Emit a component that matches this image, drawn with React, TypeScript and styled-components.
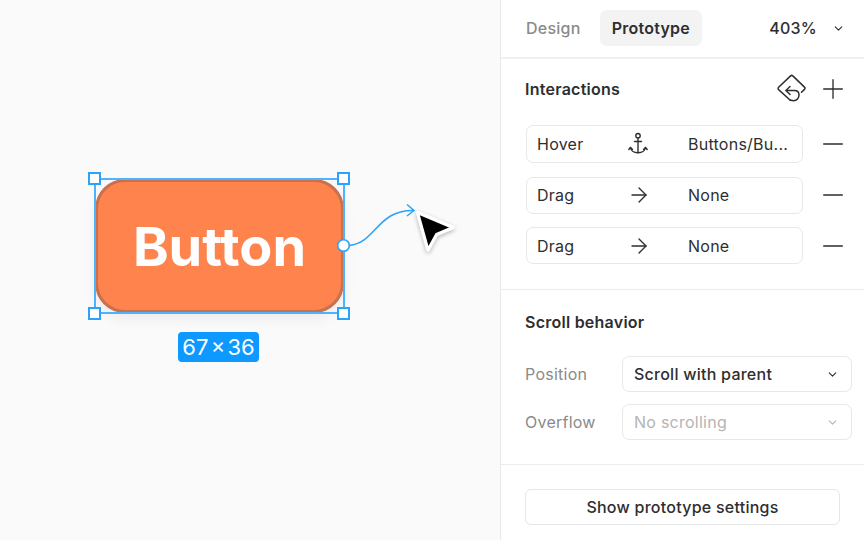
import React from "react";
import styled, { createGlobalStyle } from "styled-components";
import { ArrowRight, ChevronDown, Minus, Plus } from "lucide-react";

const GlobalStyle = createGlobalStyle`
  html, body {
    margin: 0;
    padding: 0;
    width: 864px;
    height: 540px;
    overflow: hidden;
    background: #fff;
    font-family: Inter, "Noto Sans", sans-serif;
    color: #2e2e2e;
  }
  * {
    box-sizing: border-box;
  }
`;

const Page = styled.div`
  display: flex;
  width: 864px;
  height: 540px;
`;

const Canvas = styled.div`
  position: relative;
  width: 501px;
  height: 540px;
  background: #fafafa;
  border-right: 1px solid #e9e9e9;
`;

const ButtonNode = styled.div`
  position: absolute;
  left: 95px;
  top: 179px;
  width: 249px;
  height: 134px;
  display: flex;
  align-items: center;
  justify-content: center;
  background: #ff834d;
  border: 3px solid #c9704f;
  border-radius: 30px;
  box-shadow: 0 6px 14px rgba(0, 0, 0, 0.06);
  color: #fff;
  font-size: 54px;
  font-weight: 700;
`;

const Selection = styled.div`
  position: absolute;
  left: 94px;
  top: 178px;
  width: 251px;
  height: 136px;
  border: 2px solid #4fb2fb;
`;

const Handle = styled.div<{ $x: number; $y: number }>`
  position: absolute;
  left: ${({ $x }) => $x}px;
  top: ${({ $y }) => $y}px;
  width: 13px;
  height: 13px;
  background: #fff;
  border: 2px solid #2ba3fb;
`;

const SizeLabel = styled.div`
  position: absolute;
  left: 178px;
  top: 332px;
  width: 81px;
  height: 30px;
  display: flex;
  align-items: center;
  justify-content: center;
  background: #0d99ff;
  border-radius: 4px;
  color: #fff;
  font-size: 22px;
  word-spacing: -4px;
  white-space: nowrap;
`;

const Overlay = styled.svg`
  position: absolute;
  left: 0;
  top: 0;
`;

const Panel = styled.div`
  flex: 1;
  display: flex;
  flex-direction: column;
  min-width: 0;
  letter-spacing: 0.25px;
`;

const Header = styled.div`
  display: flex;
  align-items: center;
  height: 59px;
  padding: 0 19px 1px 25px;
  border-bottom: 2px solid #f0f0f0;
  font-size: 16px;
`;

const Tab = styled.div<{ $active?: boolean }>`
  display: flex;
  align-items: center;
  height: 36px;
  padding: 0 12px;
  margin-right: ${({ $active }) => ($active ? "0" : "7px")};
  margin-left: ${({ $active }) => ($active ? "0" : "-12px")};
  border-radius: 7px;
  background: ${({ $active }) => ($active ? "#f3f3f3" : "transparent")};
  color: ${({ $active }) => ($active ? "#2e2e2e" : "#8a8a8a")};
  font-weight: ${({ $active }) => ($active ? 600 : 500)};
`;

const Zoom = styled.div`
  margin-left: auto;
  display: flex;
  align-items: center;
  gap: 15px;
  font-weight: 500;
`;

const Section = styled.div`
  padding: 0 24px;
`;

const InteractionsSection = styled(Section)`
  height: 231px;
  padding: 18px 15px 0 24px;
  border-bottom: 1px solid #ececec;
`;

const TitleRow = styled.div`
  display: flex;
  align-items: center;
  height: 24px;
  margin-bottom: 24px;
`;

const ScrollTitleRow = styled(TitleRow)`
  margin-bottom: 22px;
`;

const Title = styled.div`
  font-size: 16px;
  font-weight: 600;
  color: #2e2e2e;
`;

const TitleActions = styled.div`
  margin-left: auto;
  display: flex;
  align-items: center;
  gap: 11px;
`;

const Rows = styled.div`
  display: flex;
  flex-direction: column;
  gap: 13.5px;
`;

const Row = styled.div`
  display: flex;
  align-items: center;
  justify-content: space-between;
`;

const RowBox = styled.div<{ $tall?: boolean }>`
  display: grid;
  grid-template-columns: 90px 61px 1fr;
  align-items: center;
  width: 277px;
  height: ${({ $tall }) => ($tall ? "38px" : "37px")};
  margin-left: 1px;
  padding-left: 10px;
  border: 1px solid #e8e8e8;
  border-radius: 7px;
  font-size: 16px;
  white-space: nowrap;
`;

const ScrollSection = styled(Section)`
  height: 175px;
  padding: 20px 12px 0 24px;
  border-bottom: 1px solid #ececec;
`;

const FieldRow = styled.div`
  display: flex;
  align-items: center;
  justify-content: space-between;
  margin-bottom: 12px;
`;

const FieldLabel = styled.div`
  font-size: 16px;
  color: #8a8a8a;
`;

const Select = styled.div<{ $disabled?: boolean }>`
  display: flex;
  align-items: center;
  justify-content: space-between;
  width: 230px;
  height: 36px;
  padding: 0 12px 0 11px;
  border: 1px solid #e8e8e8;
  border-radius: 7px;
  font-size: 16px;
  font-weight: ${({ $disabled }) => ($disabled ? 400 : 500)};
  color: ${({ $disabled }) => ($disabled ? "#b4b4b4" : "#2e2e2e")};
`;

const FooterSection = styled(Section)`
  padding-top: 24px;
`;

const SettingsButton = styled.div`
  display: flex;
  align-items: center;
  justify-content: center;
  width: 315px;
  height: 36px;
  border: 1px solid #e6e6e6;
  border-radius: 6px;
  font-size: 16px;
  font-weight: 500;
`;

const LoopIcon = () => (
  <svg width="30" height="30" viewBox="0 0 30 30" fill="none" stroke="#2e2e2e" strokeWidth="1.5" strokeLinecap="round" strokeLinejoin="round">
    <path d="M14 26 2.6 15.6a1.6 1.6 0 0 1 0-2.3L14.6 1.9a1.6 1.6 0 0 1 2.2 0l11.7 11.2a1.6 1.6 0 0 1 0 2.3l-3 2.9" />
    <path d="M14 12.5 10 16.5l4 4" />
    <path d="M10 16.5h8.5c3 0 4.5 2 4.5 4.5 0 3-2.2 5.7-5.2 5.7-1.5 0-2.8-.3-3.8-.7" />
  </svg>
);

const AnchorIcon = () => (
  <svg width="22" height="26" viewBox="0 0 22 26" fill="none" stroke="#2e2e2e" strokeWidth="1.4" strokeLinecap="round" strokeLinejoin="round">
    <circle cx="11" cy="4.7" r="2.2" />
    <path d="M11 7v14.7" />
    <path d="M7.5 10.5h7" />
    <path d="M3.5 16.5c.5 3 3.5 5.2 7.5 5.2s7-2.2 7.5-5.2" />
    <path d="M1.8 18.5 3.5 16.5l2 2" />
    <path d="M16.5 18.5l2-2 1.7 2" />
  </svg>
);

const handles = [
  { x: 88, y: 172 },
  { x: 337, y: 172 },
  { x: 88, y: 307 },
  { x: 337, y: 307 },
];

const interactions = [
  { trigger: "Hover", icon: <AnchorIcon />, target: "Buttons/Bu...", tall: true },
  { trigger: "Drag", icon: <ArrowRight size={24} strokeWidth={1.4} />, target: "None", tall: false },
  { trigger: "Drag", icon: <ArrowRight size={24} strokeWidth={1.4} />, target: "None", tall: false },
];

export default function App() {
  return (
    <Page>
      <GlobalStyle />
      <Canvas>
        <ButtonNode>Button</ButtonNode>
        <Selection />
        {handles.map((h) => (
          <Handle key={`${h.x}-${h.y}`} $x={h.x} $y={h.y} />
        ))}
        <SizeLabel>67 × 36</SizeLabel>
        <Overlay width="500" height="540" viewBox="0 0 500 540" fill="none">
          <defs>
            <filter id="cursor-shadow" x="-30%" y="-30%" width="160%" height="160%">
              <feDropShadow dx="0" dy="1.5" stdDeviation="2" floodColor="#000" floodOpacity="0.3" />
            </filter>
          </defs>
          <circle cx="343.5" cy="245.5" r="5.8" fill="#fff" stroke="#2ba3fb" strokeWidth="1.6" />
          <path d="M349.5 245.5C376 243 377 209.5 414 210.5" stroke="#2ba3fb" strokeWidth="1.5" />
          <path d="M407 204.5 414 210.5 407 216" stroke="#2ba3fb" strokeWidth="1.5" />
          <path
            d="M417.5 212.5 453 227.5 436.5 234.5 428 250Z"
            fill="#000"
            stroke="#fff"
            strokeWidth="3"
            strokeLinejoin="round"
            filter="url(#cursor-shadow)"
          />
        </Overlay>
      </Canvas>
      <Panel>
        <Header>
          <Tab>Design</Tab>
          <Tab $active>Prototype</Tab>
          <Zoom>
            403%
            <ChevronDown size={13} strokeWidth={2} />
          </Zoom>
        </Header>
        <InteractionsSection>
          <TitleRow>
            <Title>Interactions</Title>
            <TitleActions>
              <LoopIcon />
              <Plus size={32} strokeWidth={1} />
            </TitleActions>
          </TitleRow>
          <Rows>
            {interactions.map((item, i) => (
              <Row key={i}>
                <RowBox $tall={item.tall}>
                  <span>{item.trigger}</span>
                  {item.icon}
                  <span>{item.target}</span>
                </RowBox>
                <Minus size={32} strokeWidth={1} />
              </Row>
            ))}
          </Rows>
        </InteractionsSection>
        <ScrollSection>
          <ScrollTitleRow>
            <Title>Scroll behavior</Title>
          </ScrollTitleRow>
          <FieldRow>
            <FieldLabel>Position</FieldLabel>
            <Select>
              Scroll with parent
              <ChevronDown size={13} strokeWidth={2} />
            </Select>
          </FieldRow>
          <FieldRow>
            <FieldLabel>Overflow</FieldLabel>
            <Select $disabled>
              No scrolling
              <ChevronDown size={13} strokeWidth={2} />
            </Select>
          </FieldRow>
        </ScrollSection>
        <FooterSection>
          <SettingsButton>Show prototype settings</SettingsButton>
        </FooterSection>
      </Panel>
    </Page>
  );
}
